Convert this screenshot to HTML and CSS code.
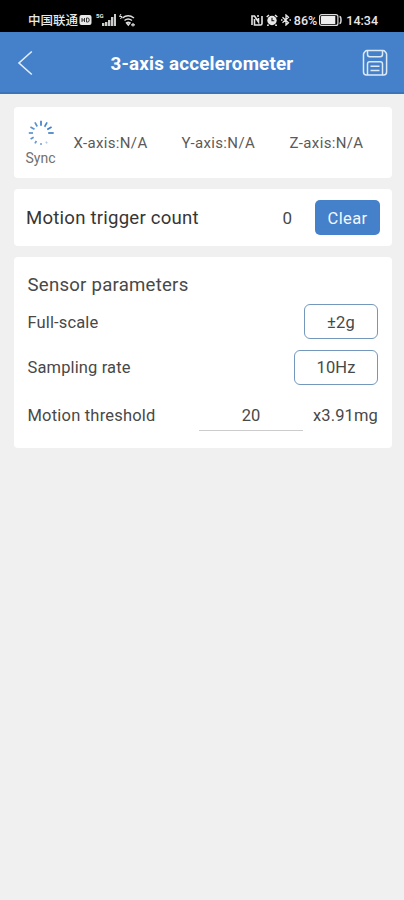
FILE: index.html
```html
<!DOCTYPE html>
<html lang="en">
<head>
<meta charset="utf-8">
<title>3-axis accelerometer</title>
<link rel="stylesheet" href="styles.css">
</head>
<body>
<div class="status">
  <div class="status-group">
    <span class="carrier">中国联通</span>
    <svg class="hd" width="13" height="10" viewBox="0 0 13 10"><rect x=".5" y="0" width="12" height="10" rx="2" fill="#e8e8e8"/><path d="M3 3v4M5.500 3v4M3 5h2.500M7.500 3v4h1.300q1.400 0 1.400-2t-1.400-2z" fill="none" stroke="#333" stroke-width="1"/></svg>
    <span class="net">5G</span>
    <svg class="signal" width="14" height="12" viewBox="0 0 14 12" fill="#ccc"><path d="M0 9h2.400v3H0zM3 8h2.400v4H3zM6 6h2.400v6H6zM9 3h2.400v9H9zM12 0h2v12h-2z"/></svg>
    <svg class="wifi" width="18" height="13" viewBox="0 0 18 13" fill="none" stroke="#ddd" stroke-width="1.500"><path d="M3 0L1.500 2.500H4L2.500 5" stroke-width="1"/><path d="M4.500 4q5.500-4.500 11.500 0M6.500 6.500q3.500-2.800 7.500 0M8.500 8.800q1.700-1.300 3.500 0L10.300 11z"/><path d="M13 10.800h4M15 9v3.500" stroke-width="1.200"/></svg>
  </div>
  <div class="status-group">
    <svg width="12" height="11" viewBox="0 0 12 11"><path d="M1 10V1h2.500l4 6V3M3.500 4v6h6q1.500 0 1.500-1.500V1M6 1h2" fill="none" stroke="#e4e4e4" stroke-width="1.600"/></svg>
    <svg class="alarm" width="12" height="12" viewBox="0 0 12 12"><circle cx="6" cy="6.500" r="4.700" fill="#e8e8e8"/><path d="M.7 3L3 1M11.300 3L9 1M2.500 10.500L1.500 12M9.500 10.500l1 1.500" stroke="#e8e8e8" stroke-width="1.500"/><path d="M6 3.800v3h2.300" fill="none" stroke="#111" stroke-width="1.100"/></svg>
    <svg class="bt" width="10" height="12" viewBox="0 0 10 12"><path d="M1.500 3.200l6 5.500L5 11V1l2.500 2.300-6 5.500M0 6h1.500M8.500 6H10" fill="none" stroke="#e8e8e8" stroke-width="1.300"/></svg>
    <span class="percent">86%</span>
    <svg class="battery" width="23" height="12" viewBox="0 0 23 12"><rect x=".6" y=".6" width="18.300" height="10.800" rx="2" fill="none" stroke="#ddd" stroke-width="1.200"/><rect x="2" y="2" width="14.300" height="8" rx=".5" fill="#eee"/><path d="M20.500 2.500q1.500 0 1.500 3.500t-1.500 3.500" fill="none" stroke="#ddd" stroke-width="1.500"/></svg>
    <span class="clock">14:34</span>
  </div>
</div>
<header class="bar">
  <svg class="back" width="16" height="26" viewBox="0 0 16 26"><path d="M14.800 1.500L2 13l12.800 11.500" fill="none" stroke="#e2edf9" stroke-width="1.600"/></svg>
  <h1>3-axis accelerometer</h1>
  <svg class="save" width="26" height="28" viewBox="0 0 26 28" fill="none" stroke="#dce9f7" stroke-width="1.500"><path d="M5 1.500h16q1.200 0 2 1l1 1.300q.6.800.6 1.800V23q0 3-3 3H4.500q-3 0-3-3V5.500q0-1 .6-1.800l1-1.200q.8-1 1.900-1z"/><path d="M5.500 2v3.500q0 2.200 2.200 2.200h10.600q2.200 0 2.200-2.200V2M5.500 26V15q0-2.200 2.200-2.200h10.600q2.200 0 2.200 2.200v11M8.500 17.300h9M8.500 21.500h9"/></svg>
</header>
<main>
  <section class="card axes">
    <div class="sync">
      <svg width="26" height="26" viewBox="-13 -13 26 26" stroke="#3f7fca" stroke-width="1.700">
        <path d="M0-7.200V-12.200"/>
        <path d="M0-7.200V-12.200" transform="rotate(30)" opacity=".95"/>
        <path d="M0-7.200V-12.200" transform="rotate(60)"/>
        <path d="M0-7.200V-12.700" transform="rotate(90)"/>
        <path d="M0-10V-12" transform="rotate(150)" opacity=".4"/>
        <path d="M0-10V-12" transform="rotate(180)" opacity=".65"/>
        <path d="M0-9.200V-12" transform="rotate(210)" opacity=".8"/>
        <path d="M0-8.500V-12" transform="rotate(240)" opacity=".85"/>
        <path d="M0-8V-12.200" transform="rotate(270)" opacity=".85"/>
        <path d="M0-7.500V-12.200" transform="rotate(300)" opacity=".85"/>
        <path d="M0-7.500V-12.200" transform="rotate(330)" opacity=".85"/>
      </svg>
      <span>Sync</span>
    </div>
    <span class="axis">X-axis:N/A</span>
    <span class="axis">Y-axis:N/A</span>
    <span class="axis">Z-axis:N/A</span>
  </section>
  <section class="card motion">
    <span class="motion-title">Motion trigger count</span>
    <span class="count">0</span>
    <button class="clear" type="button">Clear</button>
  </section>
  <section class="card params">
    <h2>Sensor parameters</h2>
    <div class="row"><span class="label">Full-scale</span><button class="select scale" type="button">±2g</button></div>
    <div class="row"><span class="label">Sampling rate</span><button class="select rate" type="button">10Hz</button></div>
    <div class="row threshold"><span class="label wide">Motion threshold</span><span class="field">20</span><span class="label unit">x3.91mg</span></div>
  </section>
</main>
</body>
</html>
```
FILE: styles.css
```css
* { box-sizing: border-box; }
body { margin: 0; height: 900px; overflow: hidden; background: #f0f0f0; color: #484848; font-family: Roboto, "Noto Sans CJK SC", sans-serif; }
span { white-space: nowrap; }
svg { display: block; flex: none; }
button { font-family: inherit; padding: 0; }
.status { height: 32px; padding: 8px 26px 0 28px; background: #000; color: #e8e8e8; display: flex; justify-content: space-between; }
.status-group { display: flex; align-items: center; height: 24px; }
.carrier { font-size: 12.500px; font-weight: 500; line-height: 24px; padding-top: 2px; }
.hd { margin-left: 1px; }
.net { font-size: 6px; font-weight: 700; align-self: flex-start; margin: 4px 0 0 4px; }
.signal { margin-left: -2px; }
.wifi { margin-left: 2px; }
.alarm { margin-left: 3px; }
.bt { margin-left: 3px; }
.percent { font-size: 12.500px; font-weight: 500; margin-left: 3px; }
.battery { margin-left: 2px; }
.clock { font-size: 12.500px; font-weight: 500; margin-left: 4px; }
.bar { height: 62px; padding: 2px 16px 0 17px; display: flex; align-items: center; background: #4580ca; border-bottom: 2px solid #3b74b8; }
h1 { margin: 2px 0 0 77.500px; white-space: nowrap; font-size: 18.800px; letter-spacing: .2px; font-weight: 700; color: #fff; }
.save { margin-left: auto; }
main { padding: 13px 12px 0 14px; display: flex; flex-direction: column; gap: 11px; }
.card { background: #fff; border-radius: 4px; }
.axes { height: 71px; padding-left: 10.500px; display: flex; align-items: center; }
.sync { width: 32px; display: flex; flex-direction: column; align-items: center; font-size: 14px; line-height: 16px; gap: 4px; color: #707070; }
.axis { font-size: 15px; letter-spacing: .35px; margin: 1px 0 0 17px; width: 91px; color: #5a5a5a; }
.motion { height: 57px; padding: 0 12px; display: flex; align-items: center; }
.motion-title { font-size: 18.600px; letter-spacing: .22px; color: #363636; padding-top: 1px; }
.count { margin-left: auto; font-size: 17px; }
.clear { width: 65px; height: 35px; margin-left: 23px; border: 0; border-radius: 5px; background: #4580ca; color: #f2f7fd; font-size: 16.500px; letter-spacing: .35px; padding-top: 1px; }
.params { height: 191px; padding: 15px 14px 0 13.500px; }
h2 { margin: 0; font-size: 18.600px; letter-spacing: .24px; font-weight: 400; line-height: 25px; color: #484848; padding-top: 1px; }
.row { height: 45.500px; display: flex; align-items: center; justify-content: space-between; }
h2 + .row { margin-top: 1px; }
.label { font-size: 16.500px; letter-spacing: .13px; padding-top: 1px; }
.wide { letter-spacing: .2px; }
.select { height: 35px; border: 1.500px solid #7398bc; border-radius: 6px; background: #fff; color: #484848; font-size: 16.500px; letter-spacing: .13px; padding-top: 1px; }
.scale { width: 74px; }
.rate { width: 84px; }
.threshold { height: 49px; }
.field { margin-left: auto; width: 104px; height: 32px; line-height: 33px; text-align: center; border-bottom: 1.500px solid #ccc; font-size: 16.500px; }
.unit { margin-left: 10px; }
```
